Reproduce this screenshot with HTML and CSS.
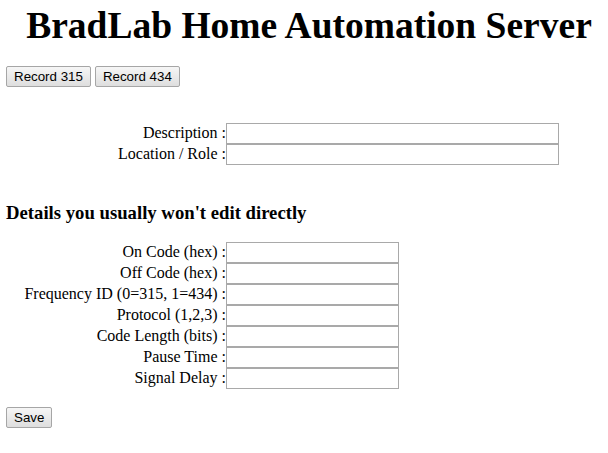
FILE: index.html
```
<!DOCTYPE html>
<html lang="en">

<head>
    <meta charset="UTF-8">
    <meta name="viewport" content="width=device-width, initial-scale=1.0">
    <title>BradLab Home Automation Server</title>
    <link rel="stylesheet" href="styles.css">
</head>

<body>
    <h1>BradLab Home Automation Server</h1>

    <div class="actions">
        <button type="button">Record 315</button>
        <button type="button">Record 434</button>
    </div>

    <div class="fields wide">
        <label for="description">Description :</label>
        <input type="text" id="description" />
        <label for="location">Location / Role :</label>
        <input type="text" id="location" />
    </div>

    <h3>Details you usually won't edit directly</h3>

    <div class="fields">
        <label for="onCode">On Code (hex) :</label>
        <input type="text" id="onCode" />
        <label for="offCode">Off Code (hex) :</label>
        <input type="text" id="offCode" />
        <label for="freqId">Frequency ID (0=315, 1=434) :</label>
        <input type="text" id="freqId" />
        <label for="protocol">Protocol (1,2,3) :</label>
        <input type="text" id="protocol" />
        <label for="codeLength">Code Length (bits) :</label>
        <input type="text" id="codeLength" />
        <label for="pauseTime">Pause Time :</label>
        <input type="text" id="pauseTime" />
        <label for="signalDelay">Signal Delay :</label>
        <input type="text" id="signalDelay" />
    </div>

    <div class="actions save">
        <button type="button">Save</button>
    </div>
</body>

</html>
```

FILE: styles.css
```
body {
    font-family: "Liberation Serif", "Times New Roman", serif;
    font-size: 16px;
    color: #000;
    margin: 5px 6px;
}

h1 {
    text-align: center;
    font-size: 37.5px;
    margin: 0;
    padding-left: 10px;
    line-height: 41px;
}

h3 {
    font-size: 18.72px;
    margin: 37px 0 0;
    line-height: 21px;
}

button {
    font-family: "Liberation Sans", Arial, sans-serif;
    font-size: 13.33px;
    color: #000;
    height: 21px;
    padding: 0 7px;
    border: 1px solid #a6a6a6;
    border-radius: 2px;
    background: linear-gradient(#f6f6f6, #dedede);
    vertical-align: top;
}

.actions {
    margin-top: 20px;
    height: 21px;
}

.save {
    margin-top: 18px;
}

.fields {
    display: grid;
    grid-template-columns: 220px auto;
    grid-auto-rows: 21px;
    justify-content: start;
    align-items: center;
    margin-top: 36px;
}

h3 + .fields {
    margin-top: 19px;
}

.fields label {
    text-align: right;
    padding-bottom: 2px;
}

.fields input {
    box-sizing: border-box;
    width: 173px;
    height: 21px;
    margin: 0;
    padding: 1px 2px;
    border: 1px solid #a9a9a9;
    font-size: 13.33px;
}

.wide input {
    width: 333px;
}
```
